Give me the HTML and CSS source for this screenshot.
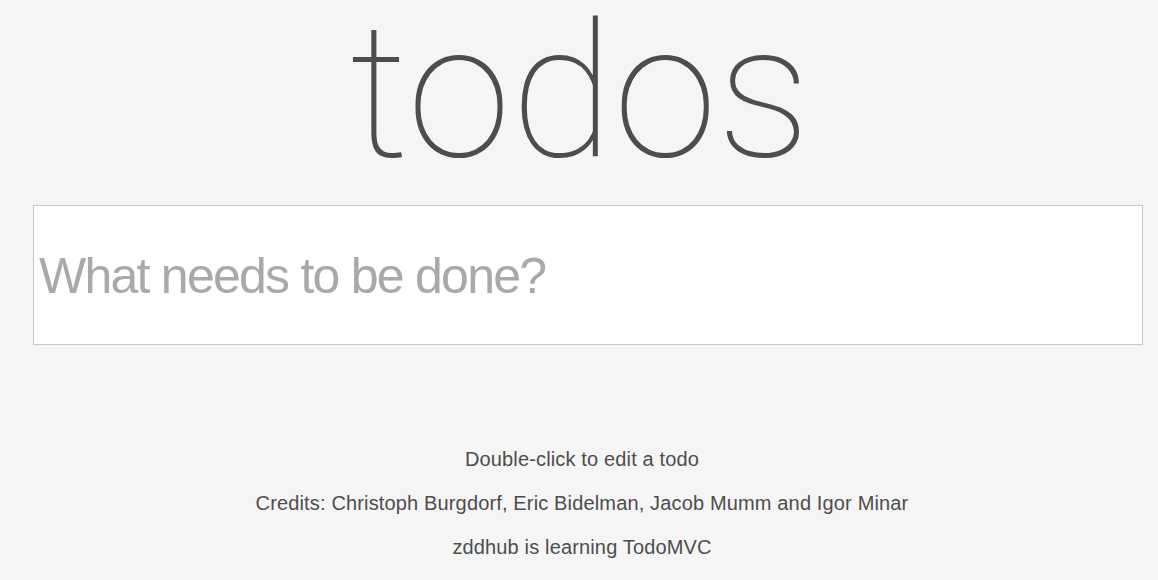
FILE: index.html
```html
<!DOCTYPE html>
<html lang="en">
<head>
<meta charset="utf-8">
<title>todos</title>
<link rel="stylesheet" href="styles.css">
</head>
<body>
<section class="todoapp">
  <header class="header">
    <h1 class="title">todos</h1>
    <div class="entry">
      <input class="new-todo" type="text" placeholder="What needs to be done?">
    </div>
  </header>
</section>
<footer class="info">
  <p>Double-click to edit a todo</p>
  <p>Credits: Christoph Burgdorf, Eric Bidelman, Jacob Mumm and Igor Minar</p>
  <p>zddhub is learning TodoMVC</p>
</footer>
</body>
</html>
```
FILE: styles.css
```css
html, body {
  margin: 0;
  padding: 0;
}
body {
  background: #f5f5f5;
  color: #4d4d4d;
  font-family: "Liberation Sans", Arial, sans-serif;
  width: 1158px;
  height: 580px;
  overflow: hidden;
}
.header {
  display: flex;
  flex-direction: column;
  align-items: center;
}
.title {
  margin: 0;
  height: 205px;
  padding-left: 2px;
  font-family: "Roboto", "Lato", sans-serif;
  font-weight: 100;
  font-size: 188px;
  line-height: 184px;
  color: #4d4d4d;
  text-align: center;
}
.entry {
  align-self: stretch;
  padding-left: 33px;
}
.new-todo {
  display: block;
  box-sizing: border-box;
  width: 1110px;
  height: 140px;
  margin: 0;
  padding: 2px 0 0 5px;
  border: 1px solid #c8c8c8;
  background: #fff;
  font-family: "Liberation Sans", Arial, sans-serif;
  font-size: 50px;
  letter-spacing: -1.75px;
  color: #4d4d4d;
  outline: none;
}
.new-todo::placeholder {
  color: #a9a9a9;
}
.info {
  margin-top: 92px;
  padding-left: 6px;
  display: flex;
  flex-direction: column;
  align-items: center;
}
.info p {
  margin: 0;
  height: 44px;
  line-height: 44px;
  font-size: 20px;
  letter-spacing: 0.15px;
  color: #4d4d4d;
}
```
